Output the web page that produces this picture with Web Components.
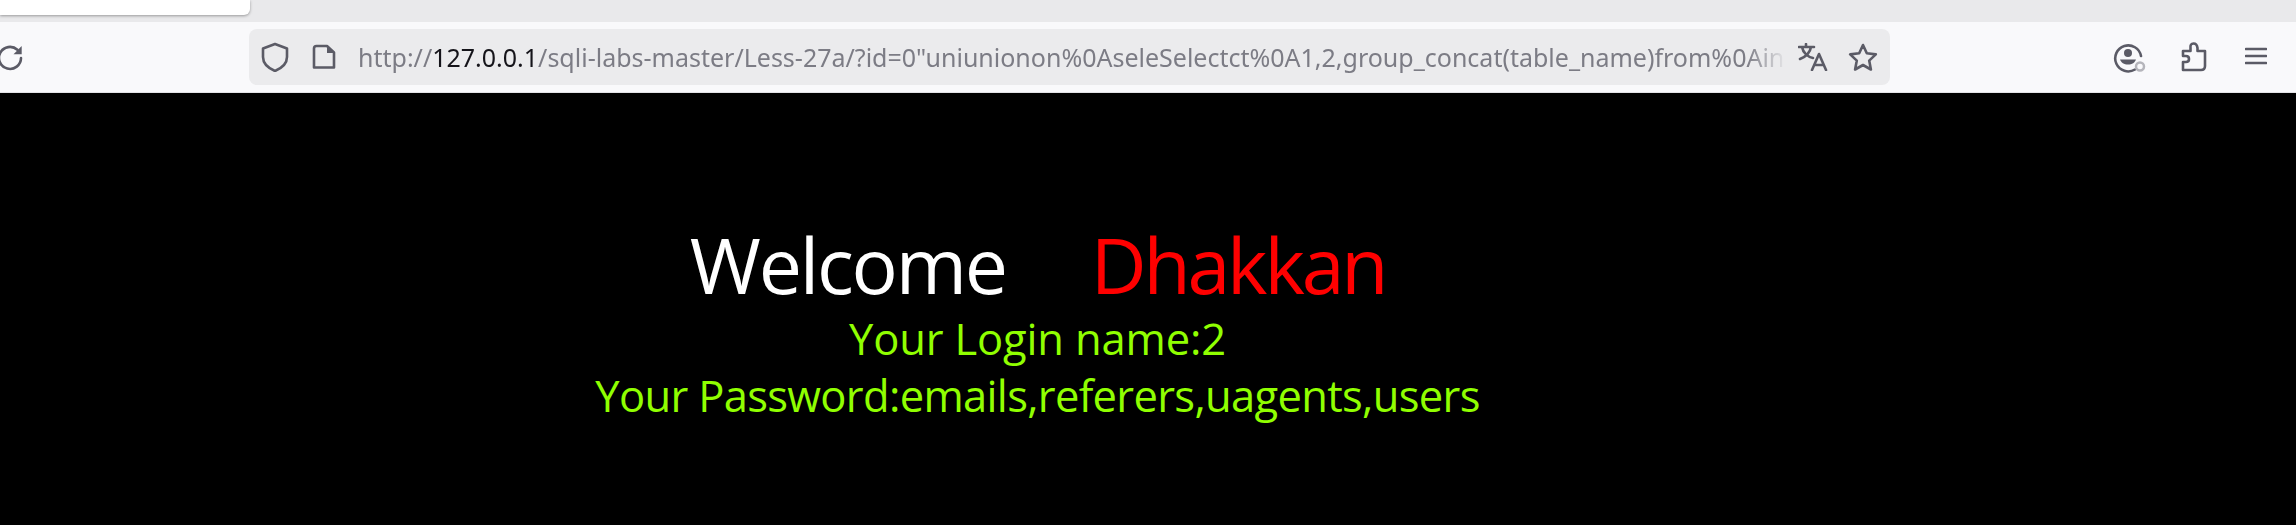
<!DOCTYPE html>
<html><head><meta charset="utf-8"><style>
html,body{margin:0;padding:0;background:#000;overflow:hidden}
body{width:2296px;height:525px;display:flex;flex-direction:column}
</style></head><body>
<tab-strip></tab-strip>
<nav-bar url-host="127.0.0.1"></nav-bar>
<lab-page></lab-page>
<script>
const el=(tag,css,html)=>customElements.define(tag,class extends HTMLElement{constructor(){super();this.attachShadow({mode:'open'}).innerHTML='<style>'+css+'</style>'+html}});
el('tab-strip',`:host{display:block;height:22px;background:#e9e9eb;flex:none;overflow:hidden}
.tab{width:250px;height:15px;background:#fff;border-radius:0 0 6px 0;box-shadow:0 1px 3px rgba(0,0,0,.35)}`,`<div class="tab"></div>`);
const ic='fill="none" stroke="#5b5b66" stroke-width="2.6" stroke-linejoin="round" stroke-linecap="round"';
el('nav-bar',`:host{display:flex;align-items:center;height:70px;flex:none;background:#f9f9fb;border-bottom:1px solid #e3e3e6;box-sizing:content-box;position:relative}
svg{display:block;flex:none}
.reload{margin-left:-2px;width:26px}
.url{margin-left:225px;width:1641px;height:56px;background:#ebebed;border-radius:8px;display:flex;align-items:center;box-sizing:border-box;padding-left:12px}
.text{font:25px "Noto Sans",sans-serif;color:#7c7c85;width:1429px;margin-left:22px;white-space:nowrap;overflow:hidden;-webkit-mask-image:linear-gradient(90deg,#000 97.2%,transparent)}
.text b{font-weight:400;color:#15141a}`,`
<svg class="reload" width="26" height="28" viewBox="0 0 26 28" ${ic}><path d="M23 15a11 11 0 1 1-3.6-8.2"/><path d="M23.7 3v8.2h-8.2z" fill="#5b5b66" stroke="none"/></svg>
<div class="url">
<svg width="28" height="30" viewBox="0 0 28 30" ${ic}><path d="M14 2 26 6.500V15C26 21 21 26 14 29 7 26 2 21 2 15V6.500Z"/></svg>
<svg style="margin-left:23px" width="24" height="26" viewBox="0 0 24 26" ${ic}><path d="M15 2H4.500A2.500 2.500 0 0 0 2 4.500v19H22V8.500Z"/><path d="M15 2 22 9H15Z" fill="#5b5b66" stroke="none"/></svg>
<div class="text">http://<b>127.0.0.1</b>/sqli-labs-master/Less-27a/?id=0"uniunionon%0AseleSelectct%0A1,2,group_concat(table_name)from%0Ain</div>
<svg style="margin-left:11px" width="30" height="28" viewBox="0 0 30 28" ${ic}><path d="M1 4H16M8 1v3M4 4c1 6 6 10 11 11M13 4c-1 6-6 10-11 12"/><path d="M14 27 21 11l7 16M16.500 22H25.500"/></svg>
<svg style="margin-left:20px" width="30" height="28" viewBox="0 0 30 28" ${ic}><path d="M15 2 18.800 10.300 27.800 11.400 21.200 17.600 22.900 26.500 15 22 7.100 26.500 8.800 17.600 2.200 11.400 11.200 10.300Z"/></svg>
</div>
<svg style="position:absolute;left:2113px;top:20px" width="34" height="32" viewBox="0 0 34 32" ${ic}><path d="M22 27.500A13 13 0 1 1 28 14"/><circle cx="15" cy="11" r="4" fill="#5b5b66" stroke="none"/><path d="M7 17.500h16c-1 3-4 5-8 5s-7-2-8-5z" fill="#5b5b66" stroke="none"/><circle cx="27" cy="24.500" r="4" stroke="#b5b5bb" stroke-width="2.500"/></svg>
<svg style="position:absolute;left:2181px;top:20px" width="26" height="30" viewBox="0 0 26 30" ${ic}><path d="M2 28H20Q24 28 24 24V9H16.500V6Q16 1.500 12.500 1.500 9 1.500 9.500 6V9H2V14H5Q8 14 8 17 8 20 5 20H2Z"/></svg>
<svg style="position:absolute;left:2245px;top:25px" width="22" height="18" viewBox="0 0 22 18" ${ic}><path d="M1 2H21M1 9H21M1 16H21"/></svg>
`);
el('lab-page',`:host{display:block;flex:1;background:#000;text-align:center;width:2075px;font-family:"Open Sans",sans-serif;padding-top:127px;box-sizing:border-box}
.w{font-size:77px;line-height:90px;letter-spacing:-2.2px;color:#fff;display:flex;justify-content:center;gap:85px}
.w i{font-style:normal;color:#f00;letter-spacing:-3.2px}
.g{font-size:43.5px;line-height:57px;color:#90ff00}
.a{letter-spacing:-.15px}.b{letter-spacing:-.67px}`,`
<div class="w"><span>Welcome</span><i>Dhakkan</i></div>
<div class="g a">Your Login name:2</div>
<div class="g b">Your Password:emails,referers,uagents,users</div>`);
</script></body></html>
